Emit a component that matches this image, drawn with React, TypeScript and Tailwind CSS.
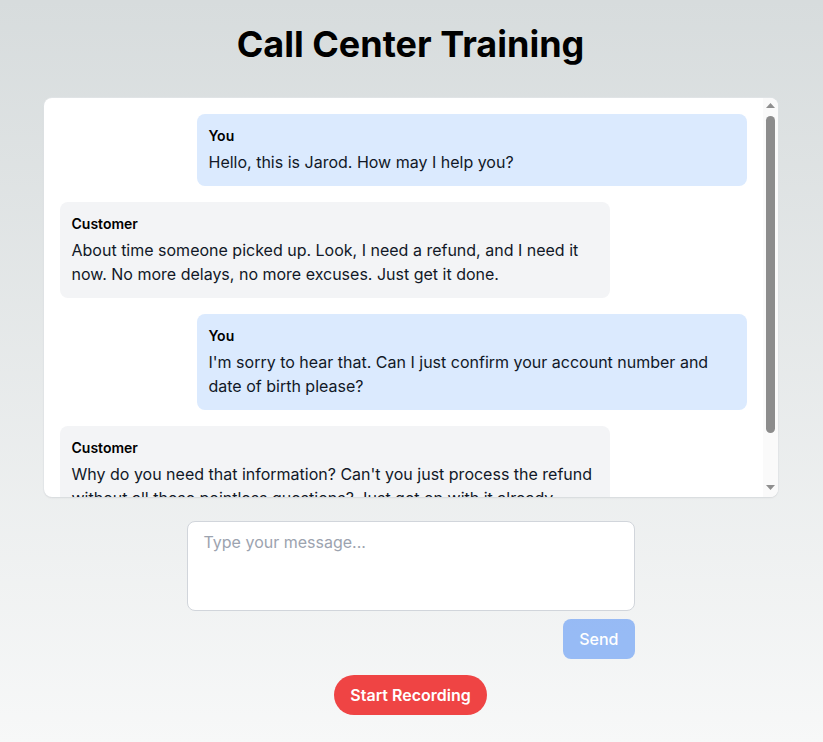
import React from "react";

type Message = { role: "user" | "customer"; text: string };

const messages: Message[] = [
  { role: "user", text: "Hello, this is Jarod. How may I help you?" },
  {
    role: "customer",
    text: "About time someone picked up. Look, I need a refund, and I need it now. No more delays, no more excuses. Just get it done.",
  },
  {
    role: "user",
    text: "I'm sorry to hear that. Can I just confirm your account number and date of birth please?",
  },
  {
    role: "customer",
    text: "Why do you need that information? Can't you just process the refund without all these pointless questions? Just get on with it already.",
  },
];

function Scrollbar() {
  return (
    <div className="flex w-[15px] shrink-0 flex-col bg-[#fafafa]">
      <div className="flex h-[15px] items-center justify-center">
        <svg width="9" height="5" viewBox="0 0 9 5">
          <path d="M4.5 0 L9 5 L0 5 Z" fill="#8f8f8f" />
        </svg>
      </div>
      <div className="flex-1 px-[3px] pt-[3px]">
        <div className="h-[317px] rounded-full bg-[#8c8c8c]" />
      </div>
      <div className="flex h-[15px] items-center justify-center pb-[4px]">
        <svg width="9" height="5" viewBox="0 0 9 5">
          <path d="M0 0 L9 0 L4.5 5 Z" fill="#8f8f8f" />
        </svg>
      </div>
    </div>
  );
}

export default function App() {
  return (
    <div className="min-h-screen bg-gradient-to-b from-[#d7dcdd] to-[#f7f8f8] pl-4 pr-[18px] pt-6 pb-6 font-['Inter',sans-serif] text-[#111827]">
      <h1 className="mb-[34px] text-center text-4xl font-bold text-black">Call Center Training</h1>

      {/* Chat window */}
      <div className="mx-auto flex h-[399px] w-full max-w-[734px] overflow-hidden rounded-lg bg-white shadow-[0_1px_2px_rgba(0,0,0,0.08),0_0_0_1px_rgba(229,231,235,0.6)]">
        <div className="flex-1 overflow-hidden p-4">
          <div className="flex flex-col gap-4">
            {messages.map((m, i) => {
              const isUser = m.role === "user";
              return (
                <div key={i} className={`flex ${isUser ? "justify-end" : "justify-start"}`}>
                  <div className={`w-[550px] rounded-lg p-3 ${isUser ? "bg-[#dbeafe]" : "bg-[#f3f4f6]"}`}>
                    <div className="mb-1 text-sm font-semibold text-black">{isUser ? "You" : "Customer"}</div>
                    <p className="text-base leading-6">{m.text}</p>
                  </div>
                </div>
              );
            })}
          </div>
        </div>
        <Scrollbar />
      </div>

      {/* Input */}
      <div className="mx-auto mt-6 flex w-full max-w-md flex-col items-end">
        <textarea
          rows={3}
          placeholder="Type your message..."
          className="h-[90px] w-full resize-none rounded-lg border border-[#d1d5db] bg-white px-4 py-2 text-base leading-6 outline-none placeholder:text-[#9ca3af]"
        />
        <button className="mt-2 rounded-lg bg-[#3b82f6]/50 px-4 py-2 text-base font-medium text-white">Send</button>
      </div>

      <div className="mt-4 flex justify-center">
        <button className="rounded-full bg-[#ef4444] px-4 py-2 text-base font-semibold text-white">Start Recording</button>
      </div>
    </div>
  );
}
